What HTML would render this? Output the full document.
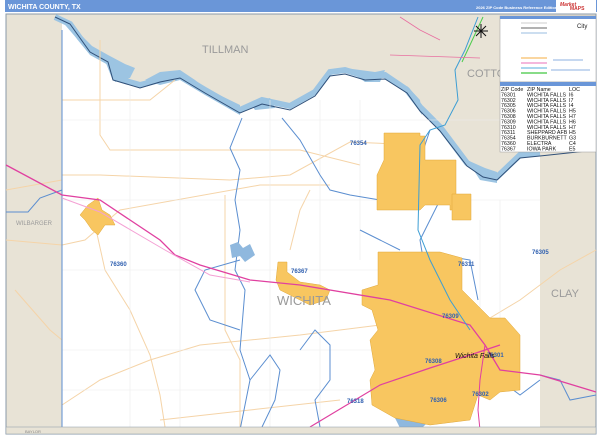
<!DOCTYPE html>
<html><head><meta charset="utf-8"><style>
html,body{margin:0;padding:0;background:#fff;width:600px;height:436px;overflow:hidden;font-family:"Liberation Sans",sans-serif}
</style></head><body>
<svg width="600" height="436" viewBox="0 0 600 436" xmlns="http://www.w3.org/2000/svg" font-family="Liberation Sans, sans-serif">
<rect x="0" y="0" width="600" height="436" fill="#fff"/>
<rect x="5" y="0" width="592" height="12" fill="#6a96d8"/>
<text x="8" y="9" font-size="7" font-weight="bold" fill="#fff">WICHITA COUNTY, TX</text>
<text x="476" y="9" font-size="4" font-weight="bold" fill="#fff">2026 ZIP Code Business Reference Edition</text>
<rect x="556" y="0" width="40" height="12" fill="#fff"/>
<text x="560" y="6" font-size="5" font-style="italic" font-weight="bold" fill="#c33">Market</text>
<text x="570" y="10" font-size="5" font-weight="bold" fill="#c33">MAPS</text>
<rect x="6" y="14" width="590" height="420" fill="#e8e3d6" stroke="#8a9aa8" stroke-width="1"/>
<path d="M62 22 L55 17 L70 24 L80 38 L90 50 L108 60 L115 78 L140 85 L160 80 L180 75 L205 90 L240 110 L262 100 L290 106 L315 92 L330 72 L345 70 L365 76 L385 75 L407 90 L420 107 L440 127 L467 163 L483 173 L497 177 L520 155 L540 153 L540 427 L62 427 Z" fill="#fff"/>
<!-- river wide sections -->
<path d="M58 17 L70 22 L80 34 L92 46 L108 55 L125 64 L135 68 L130 78 L115 82 L110 66 L90 55 L78 40 L66 26 Z" fill="#9cc4e2"/>
<path d="M145 80 L160 72 L180 70 L195 80 L205 88 L240 105 L240 115 L205 95 L180 80 L160 85 Z" fill="#9cc4e2"/>
<path d="M250 103 L270 98 L275 108 L255 110 Z" fill="#9cc4e2"/>
<path d="M345 68 L360 70 L375 72 L385 70 L380 82 L365 82 Z" fill="#9cc4e2"/>
<path d="M407 86 L420 100 L422 115 L412 100 Z" fill="#9cc4e2"/>
<path d="M467 160 L485 168 L497 172 L497 183 L480 180 Z" fill="#9cc4e2"/>
<path d="M55 17 L70 24 L80 38 L90 50 L108 60 L115 78 L140 85 L160 80 L180 75 L205 90 L240 110 L262 100 L290 106 L315 92 L330 72 L345 70 L365 76 L385 75 L407 90 L420 107 L440 127 L467 163 L483 173 L497 177 L520 155 L540 153" fill="none" stroke="#9cc4e2" stroke-width="6"/>
<path d="M55 17 L70 24 L80 38 L90 52 L108 62 L113 80 L140 88 L160 82 L180 78 L205 93 L240 113 L262 104 L290 110 L315 96 L330 76 L345 74 L365 80 L385 79 L407 93 L420 111 L440 131 L467 166 L483 177 L497 180 L520 158 L540 156 L596 150" fill="none" stroke="#2f4f78" stroke-width="1"/>
<g fill="none" stroke="#f5d4a8" stroke-width="1">
<path d="M62 175 L100 175 L230 180 L290 175 L350 142 L420 145"/>
<path d="M62 245 L85 240 L120 210 L260 185 L330 185"/>
<path d="M95 225 L105 270 L130 310 L150 355 L160 395 L165 427"/>
<path d="M62 405 L100 380 L150 360 L200 345 L300 335 L380 325"/>
<path d="M225 195 L225 330 L240 360 L240 427"/>
<path d="M100 40 L100 135 L110 150 L300 150 L360 165"/>
<path d="M62 100 L150 100 L175 80"/>
<path d="M160 420 L250 410 L340 400"/>
<path d="M470 330 L520 300 L560 270 L596 250"/>
<path d="M290 250 L300 210 L310 190"/>
<path d="M6 240 L62 245 M6 190 L62 180 M15 290 L50 330 L62 340"/>
</g>
<g fill="none" stroke="#ececec" stroke-width="0.6">
<path d="M62 120 H540 M62 200 H540 M62 270 H380 M62 350 H380 M62 390 H380 M130 90 V427 M180 90 V427 M270 100 V427 M320 100 V427 M360 100 V260 M480 220 V320 M500 200 V350"/>
</g>
<g fill="none" stroke="#5b8ed0" stroke-width="1">
<path d="M62 30 V427"/>
<path d="M242 118 L230 148 L240 170 L235 200 L240 230 L235 270 L245 290 L240 350 L250 380 L240 430"/>
<path d="M282 118 L300 140 L320 175 L330 190 L350 195 L380 200"/>
<path d="M240 260 L205 270 L195 290 L210 320 L240 330"/>
<path d="M250 380 L270 355 L280 370 L275 400 L262 427"/>
<path d="M300 350 L315 330 L330 345 L330 380 L315 400 L320 427"/>
<path d="M430 130 L415 175 L440 200 L420 240 L430 300 L440 340 L450 370 L480 395 L500 380 L520 395 L540 380"/>
<path d="M62 190 L40 198 L28 212 L6 212"/>
<path d="M540 375 L560 380 L570 400 L596 395"/>
<path d="M440 255 L470 260 L478 300"/>
<path d="M360 230 L380 240 L400 250"/>
</g>
<path d="M230 245 L238 242 L243 248 L250 244 L255 255 L245 262 L240 256 L232 258 Z" fill="#8fb8de"/>
<path d="M395 418 L420 410 L430 420 L420 430 L400 428 Z" fill="#8fb8de"/>
<g fill="#f8c660" stroke="#e0a83a" stroke-width="0.5">
<path d="M384 133 L420 133 L420 136 L425 136 L425 160 L456 160 L456 210 L450 210 L450 205 L425 205 L420 210 L377 210 L377 175 L384 160 Z"/>
<path d="M452 194 L471 194 L471 220 L452 220 Z"/>
<path d="M378 252 L440 252 L462 258 L462 290 L472 300 L490 318 L505 318 L520 335 L520 390 L500 392 L490 400 L478 395 L470 420 L430 425 L395 418 L372 405 L370 380 L375 370 L370 340 L378 330 L372 310 L362 305 L362 290 L378 285 Z"/>
<path d="M88 205 L98 198 L102 210 L110 215 L115 225 L105 225 L98 235 L92 230 L85 220 L80 215 Z"/>
<path d="M278 262 L287 262 L287 272 L300 282 L320 285 L330 290 L326 300 L310 305 L300 300 L290 295 L280 290 L276 280 Z"/>
</g>
<g fill="none">
<path d="M6 165 L62 195 L100 200 L160 240 L175 255 L200 265 L250 280 L300 285 L390 300 L470 325 L485 345 L500 370 L540 375 L596 392" stroke="#e040a0" stroke-width="1.3"/>
<path d="M62 198 L100 212 L165 250 L210 275 L250 282" stroke="#f4a0d4" stroke-width="1"/>
<path d="M310 427 L380 385 L430 368 L470 355 L500 345" stroke="#e040a0" stroke-width="1.2"/>
<path d="M485 345 L480 380 L478 410 L480 430" stroke="#e040a0" stroke-width="1"/>
<path d="M478 17 L465 50 L455 70 L458 100 L445 125 L430 130 L420 145 L418 230 L430 260 L450 300 L470 330" stroke="#3d9ed4" stroke-width="1"/>
<path d="M483 17 L470 45 L462 62" stroke="#4ccc4c" stroke-width="1"/>
<path d="M400 17 L420 30 L440 40" stroke="#e86fa0" stroke-width="0.8"/>
<path d="M390 55 L480 58" stroke="#e86fa0" stroke-width="0.8"/>
</g>
<g fill="#9a9a9a">
<text x="202" y="53" font-size="11">TILLMAN</text>
<text x="467" y="77" font-size="11">COTTO</text>
<text x="551" y="297" font-size="11">CLAY</text>
<text x="16" y="225" font-size="6">WILBARGER</text>
<text x="277" y="305" font-size="13">WICHITA</text>
</g>
<g fill="#3060b0" font-size="6" font-weight="bold">
<text x="350" y="145">76354</text>
<text x="110" y="266">76360</text>
<text x="291" y="273">76367</text>
<text x="532" y="254">76305</text>
<text x="442" y="318">76309</text>
<text x="425" y="363">76308</text>
<text x="430" y="402">76306</text>
<text x="472" y="396">76302</text>
<text x="347" y="403">76318</text>
<text x="458" y="266">76311</text>
<text x="487" y="357">76301</text>
</g>
<text x="455" y="358" font-size="7" font-style="italic" fill="#111">Wichita Falls</text>
<g stroke="#111" stroke-width="1"><path d="M481 24 V38 M474 31 H488 M476 26 L486 36 M486 26 L476 36"/></g>
<rect x="500" y="16" width="96" height="66" fill="#fff" stroke="#999" stroke-width="0.5"/>
<rect x="500" y="16" width="96" height="3" fill="#6a96d8"/>
<g stroke-width="1.5" fill="none">
<path d="M521 23 H547" stroke="#ddd"/><path d="M521 28 H547" stroke="#999"/><path d="M521 33 H547" stroke="#bcd4ec"/>
<path d="M521 58 H547" stroke="#f8c880"/><path d="M521 63 H547" stroke="#f0a0d0"/><path d="M521 68 H547" stroke="#8fc8e8"/><path d="M521 73 H547" stroke="#60d060"/>
<path d="M553 60 H583 M551 70 H590" stroke="#6a96d8" stroke-width="0.8"/>
</g>
<text x="577" y="28" font-size="6" fill="#222">City</text>
<rect x="500" y="82" width="96" height="70" fill="#fff" stroke="#999" stroke-width="0.5"/>
<rect x="500" y="82" width="96" height="4" fill="#6a96d8"/>
<g font-size="5.3" fill="#111">
<text x="501" y="91">ZIP Code</text><text x="527" y="91">ZIP Name</text><text x="569" y="91">LOC</text>
<text x="501" y="96.4">76301</text><text x="527" y="96.4">WICHITA FALLS</text><text x="569" y="96.4">I6</text>
<text x="501" y="101.8">76302</text><text x="527" y="101.8">WICHITA FALLS</text><text x="569" y="101.8">I7</text>
<text x="501" y="107.2">76305</text><text x="527" y="107.2">WICHITA FALLS</text><text x="569" y="107.2">I4</text>
<text x="501" y="112.6">76306</text><text x="527" y="112.6">WICHITA FALLS</text><text x="569" y="112.6">H5</text>
<text x="501" y="118">76308</text><text x="527" y="118">WICHITA FALLS</text><text x="569" y="118">H7</text>
<text x="501" y="123.4">76309</text><text x="527" y="123.4">WICHITA FALLS</text><text x="569" y="123.4">H6</text>
<text x="501" y="128.8">76310</text><text x="527" y="128.8">WICHITA FALLS</text><text x="569" y="128.8">H7</text>
<text x="501" y="134.2">76311</text><text x="527" y="134.2">SHEPPARD AFB</text><text x="569" y="134.2">H5</text>
<text x="501" y="139.6">76354</text><text x="527" y="139.6">BURKBURNETT</text><text x="569" y="139.6">G3</text>
<text x="501" y="145">76360</text><text x="527" y="145">ELECTRA</text><text x="569" y="145">C4</text>
<text x="501" y="150.4">76367</text><text x="527" y="150.4">IOWA PARK</text><text x="569" y="150.4">E5</text>
</g>
<rect x="6" y="427" width="590" height="7" fill="#e8e3d6" stroke="#8a9aa8" stroke-width="0.5"/>
<text x="25" y="433" font-size="4" fill="#888">BAYLOR</text>
</svg>
</body></html>
